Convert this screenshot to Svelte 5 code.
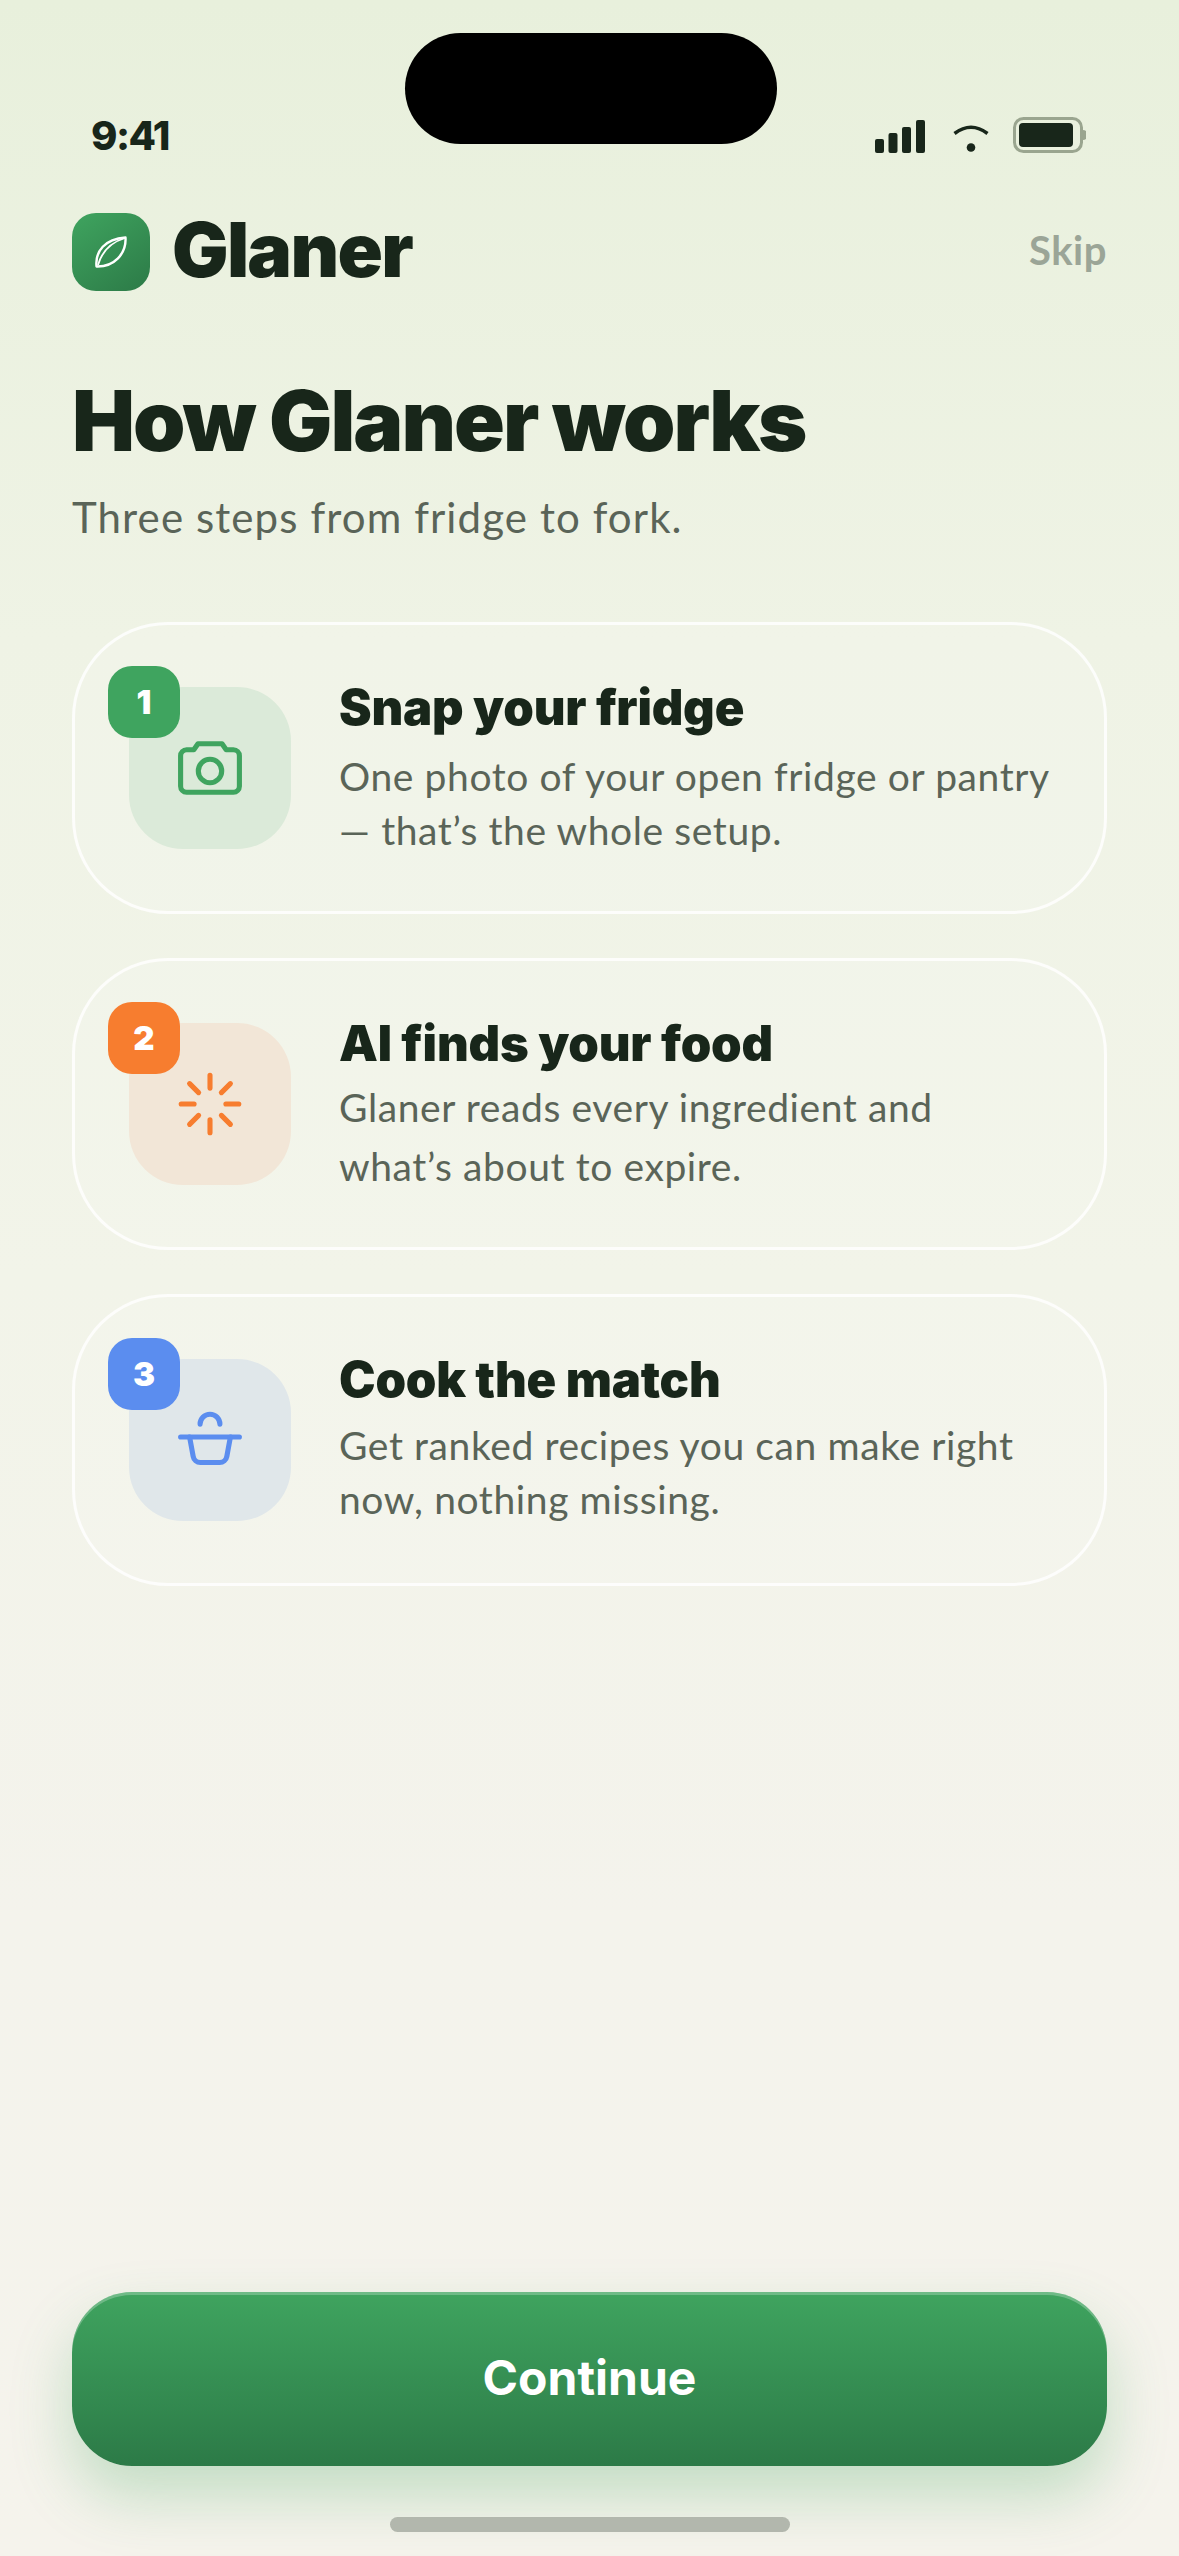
<script lang="ts">
  const steps = [
    {
      n: 1,
      tone: 'green',
      title: 'Snap your fridge',
      lines: ['One photo of your open fridge or pantry', '— that’s the whole setup.'],
      lead: 11,
      between: 0,
    },
    {
      n: 2,
      tone: 'orange',
      title: 'AI finds your food',
      lines: ['Glaner reads every ingredient and', 'what’s about to expire.'],
      lead: 6,
      between: 5,
    },
    {
      n: 3,
      tone: 'blue',
      title: 'Cook the match',
      lines: ['Get ranked recipes you can make right', 'now, nothing missing.'],
      lead: 8,
      between: 0,
    },
  ];
</script>

<div class="screen">
  <div class="island"></div>

  <div class="status">
    <span class="time">9:41</span>
    <div class="status-icons">
      <svg class="signal" width="50" height="33" viewBox="0 0 50 33" fill="#18261a">
        <rect x="0" y="19" width="9" height="14" rx="2" />
        <rect x="13.500" y="13" width="9" height="20" rx="2" />
        <rect x="27" y="7" width="9" height="26" rx="2" />
        <rect x="41" y="0" width="9" height="33" rx="2" />
      </svg>
      <svg class="wifi" width="36" height="28" viewBox="0 0 36 28" fill="none">
        <path d="M1.500 9.500Q18 -3 34.500 9.500" stroke="#18261a" stroke-width="3.500" />
        <circle cx="18" cy="23.500" r="4.300" fill="#18261a" />
      </svg>
      <svg class="battery" width="73" height="36" viewBox="0 0 73 36" fill="none">
        <rect x="1.500" y="1.500" width="67" height="33" rx="9" stroke="#9aa58f" stroke-width="3" />
        <rect x="6" y="6" width="54" height="24" rx="4" fill="#18261a" />
        <path d="M70 13a5 5 0 0 1 0 10z" fill="#9aa58f" />
      </svg>
    </div>
  </div>

  <header class="brand">
    <div class="brand-left">
      <div class="logo">
        <svg width="32" height="32" viewBox="0 0 32 32" fill="none" stroke="#fff" stroke-width="2.400" stroke-linejoin="round">
          <path d="M1.500 30.500C0 15 10 3 30.500 1.500C31.500 18 19 31 1.500 30.500Z" />
          <path d="M3 29C7 15 17 6 30 2" stroke-width="1.800" />
        </svg>
      </div>
      <span class="brand-name">Glaner</span>
    </div>
    <span class="skip">Skip</span>
  </header>

  <section class="intro">
    <h1>How Glaner works</h1>
    <p>Three steps from fridge to fork.</p>
  </section>

  <div class="steps">
    {#each steps as step}
      <article class="card">
        <div class="tile {step.tone}">
          <span class="badge">{step.n}</span>
          <svg width="72" height="72" viewBox="0 0 24 24" fill="none" stroke="currentColor" stroke-width="1.700" stroke-linecap="round" stroke-linejoin="round">
            {#if step.n === 1}
              <path d="M4.200 5.900h2.400L8 3.900h8l1.400 2h2.400a2 2 0 0 1 2 2v10.200a2 2 0 0 1-2 2H4.200a2 2 0 0 1-2-2V7.900a2 2 0 0 1 2-2z" />
              <circle cx="12" cy="13" r="3.900" />
            {:else if step.n === 2}
              <path d="M12 2.400v4.300M12 17.300v4.300M2.400 12h4.300M17.300 12h4.300M5.200 5.200l3 3M15.800 15.800l3 3M5.200 18.800l3-3M15.800 8.200l3-3" />
            {:else}
              <path d="M8.700 6.700a3.300 3.300 0 0 1 6.600 0" />
              <path d="M2.200 11h19.600" />
              <path d="M5.200 11l1.200 6.500a2.400 2.400 0 0 0 2.400 2h6.400a2.400 2.400 0 0 0 2.400-2L18.800 11" />
            {/if}
          </svg>
        </div>
        <div class="copy">
          <h2>{step.title}</h2>
          <p style:margin-top="{step.lead}px">{step.lines[0]}</p>
          <p style:margin-top="{step.between}px">{step.lines[1]}</p>
        </div>
      </article>
    {/each}
  </div>

  <div class="footer">
    <button class="continue">Continue</button>
    <div class="home"></div>
  </div>
</div>

<style>
  :global(body) {
    margin: 0;
  }

  .screen {
    position: relative;
    box-sizing: border-box;
    width: 1179px;
    height: 2556px;
    padding: 0 72px;
    display: flex;
    flex-direction: column;
    overflow: hidden;
    background: linear-gradient(180deg, #e8f0dc 0%, #eff3e5 25%, #f2f4e9 50%, #f4f3ec 75%, #f5f3ec 100%);
    font-family: Inter, "Liberation Sans", sans-serif;
    color: #18261a;
  }

  .island {
    position: absolute;
    left: 405px;
    top: 33px;
    width: 372px;
    height: 111px;
    border-radius: 56px;
    background: #000;
  }

  .status {
    height: 36px;
    margin-top: 117px;
    padding: 0 21px 0 19px;
    display: flex;
    align-items: center;
    justify-content: space-between;
  }

  .time {
    font-size: 40px;
    font-weight: 800;
    letter-spacing: -1.500px;
  }

  .status-icons {
    display: flex;
    align-items: flex-start;
    gap: 24px;
  }

  .signal {
    margin: 3px 4px 0 0;
  }

  .wifi {
    margin-top: 7px;
  }

  .brand {
    margin-top: 60px;
    height: 78px;
    display: flex;
    align-items: center;
    justify-content: space-between;
  }

  .brand-left {
    display: flex;
    align-items: center;
    gap: 22px;
  }

  .logo {
    width: 78px;
    height: 78px;
    border-radius: 24px;
    display: flex;
    align-items: center;
    justify-content: center;
    background: linear-gradient(145deg, #3fa45f, #2c7a47);
  }

  .brand-name {
    margin-top: -6px;
    font-size: 75px;
    font-weight: 900;
    letter-spacing: -1.700px;
  }

  .skip {
    margin-top: -4px;
    font-size: 40px;
    font-weight: 700;
    letter-spacing: 0.500px;
    font-family: Lato, Inter, sans-serif;
    color: #9ba597;
  }

  .intro h1 {
    margin: 80px 0 0;
    font-size: 84px;
    line-height: 100px;
    font-weight: 900;
    letter-spacing: -2px;
  }

  .intro p {
    margin: 18px 0 0;
    font-family: Lato, Inter, sans-serif;
    font-size: 42px;
    line-height: 56px;
    letter-spacing: 1.100px;
    color: #5a6458;
  }

  .steps {
    margin-top: 77px;
    display: flex;
    flex-direction: column;
    gap: 44px;
  }

  .card {
    box-sizing: border-box;
    height: 292px;
    padding: 0 54px;
    display: flex;
    align-items: center;
    gap: 48px;
    border: 3px solid rgba(255, 255, 255, 0.8);
    border-radius: 96px;
    background: rgba(255, 255, 255, 0.12);
  }

  .tile {
    position: relative;
    flex: none;
    width: 162px;
    height: 162px;
    border-radius: 54px;
    display: flex;
    align-items: center;
    justify-content: center;
  }

  .tile.green {
    background: #dbead9;
    color: #3fa45f;
  }

  .tile.orange {
    background: #f2e6d7;
    color: #f77d2f;
  }

  .tile.blue {
    background: #e0e7ea;
    color: #5b8def;
  }

  .badge {
    position: absolute;
    left: -21px;
    top: -21px;
    width: 72px;
    height: 72px;
    border-radius: 24px;
    display: flex;
    align-items: center;
    justify-content: center;
    font-size: 33px;
    font-weight: 900;
    color: #fff;
  }

  .green .badge {
    background: #3fa45f;
  }

  .orange .badge {
    background: #f77d2f;
  }

  .blue .badge {
    background: #5b8def;
  }

  .copy {
    align-self: flex-start;
    margin-top: 53px;
    white-space: nowrap;
  }

  .copy h2 {
    margin: 0;
    font-size: 49px;
    line-height: 60px;
    font-weight: 900;
    letter-spacing: -0.200px;
  }

  .copy p {
    margin: 0;
    font-family: Lato, Inter, sans-serif;
    font-size: 39px;
    line-height: 54px;
    letter-spacing: 0.600px;
    color: #5a6458;
  }

  .footer {
    margin-top: auto;
    display: flex;
    flex-direction: column;
    align-items: center;
  }

  .continue {
    width: 100%;
    height: 174px;
    padding: 0 0 4px;
    border: none;
    border-radius: 60px;
    font-family: inherit;
    font-size: 48px;
    font-weight: 700;
    color: #fff;
    background: linear-gradient(180deg, #3fa45f, #2c7a47);
    box-shadow: inset 0 3px 0 rgba(255, 255, 255, 0.25), 0 30px 60px rgba(63, 164, 95, 0.28);
  }

  .home {
    width: 400px;
    height: 15px;
    margin: 51px 0 24px;
    border-radius: 8px;
    background: #b2b7ad;
  }
</style>
